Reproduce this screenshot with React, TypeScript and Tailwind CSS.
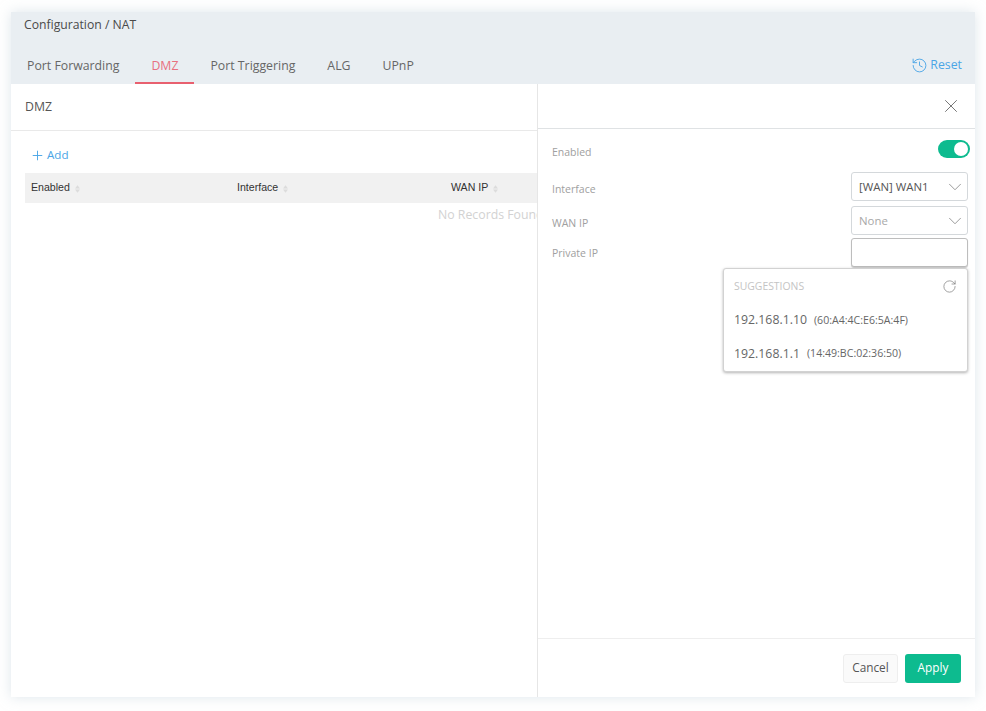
import { FC } from "react";
import { ChevronDown, History, Plus, RotateCw, X } from "lucide-react";

const font = { fontFamily: '"Open Sans", sans-serif' };

const tabs = ["Port Forwarding", "DMZ", "Port Triggering", "ALG", "UPnP"];

const SortIcon: FC = () => (
  <svg width="5" height="8" viewBox="0 0 6 9" className="ml-[5px] mt-[2px]">
    <path d="M3 0 L6 4 H0 Z M0 5 H6 L3 9 Z" fill="#dcdcdc" />
  </svg>
);

const SelectBox: FC<{ value: string; muted?: boolean }> = ({ value, muted }) => (
  <div className="w-[117px] h-[29px] border border-[#d4d8db] rounded-[3px] bg-white flex items-center justify-between pl-[7px] pr-[1px]">
    <span className={muted ? "text-[11.4px] text-[#a8a8a8]" : "text-[11.4px] text-[#555]"}>{value}</span>
    <ChevronDown size={22} strokeWidth={0.8} className="text-[#777]" />
  </div>
);

const App: FC = () => {
  return (
    <div className="w-[986px] h-[711px] bg-white overflow-hidden px-[11px] pt-[12px] pb-[14px]" style={font}>
      <div className="h-full flex flex-col bg-[#e9eef2] shadow-[0_0_12px_rgba(190,205,215,0.5)]">
        {/* Header */}
        <div className="h-[72px] shrink-0 flex flex-col">
          <div className="pl-[13px] pt-[5px] text-[12.2px] leading-[16px] text-[#4a4a4a]">Configuration / NAT</div>
          <div className="mt-[15px] flex items-stretch justify-between pr-[13px]">
            <div className="flex h-[36px]">
              {tabs.map((tab) => (
                <div
                  key={tab}
                  className={
                    tab === "DMZ"
                      ? "px-[16px] pt-[9px] text-[12.3px] leading-[18px] text-[#e8707f] border-b-2 border-[#e8606f]"
                      : "px-[16px] pt-[9px] text-[12.3px] leading-[18px] text-[#666]"
                  }
                >
                  {tab}
                </div>
              ))}
            </div>
            <div className="flex items-center gap-[2px] pb-[2px] text-[12.3px] text-[#4aa5e6]">
              <History size={17} strokeWidth={1.3} />
              <span>Reset</span>
            </div>
          </div>
        </div>

        {/* Body */}
        <div className="flex-1 flex bg-white min-h-0">
          {/* DMZ list */}
          <div className="flex-1 min-w-0 overflow-hidden">
            <div className="h-[47px] border-b border-[#e9e9e9] pl-[14px] flex items-center text-[12.3px] text-[#555]">DMZ</div>
            <div className="pl-[14px]">
              <div className="h-[42px] pl-[5px] pt-[6px] flex items-center gap-[2px] text-[11.6px] text-[#4aa5e6]">
                <Plus size={15} strokeWidth={1.5} />
                <span>Add</span>
              </div>
              <div
                className="h-[30px] w-[540px] bg-[#f1f1f1] flex items-center pl-[6px] text-[10.6px] text-[#333]"
                style={{ fontFamily: '"Liberation Sans", sans-serif' }}
              >
                <div className="w-[206px] flex items-center">Enabled<SortIcon /></div>
                <div className="w-[214px] flex items-center">Interface<SortIcon /></div>
                <div className="flex items-center">WAN IP<SortIcon /></div>
              </div>
              <div className="w-[540px] pl-[413px] pt-[3px] text-[12.3px] leading-[18px] text-[#d2d2d2] whitespace-nowrap">No Records Found</div>
            </div>
          </div>

          {/* Detail drawer */}
          <div className="w-[438px] shrink-0 flex flex-col border-l border-[#e6e6e6]">
            <div className="h-[45px] shrink-0 border-b border-[#dfe2e4] flex items-center justify-end pr-[13px]">
              <X size={22} strokeWidth={0.8} className="text-[#444]" />
            </div>
            <div className="flex-1 relative pl-[14px] pr-[7px] text-[10.5px] text-[#a0a0a0]">
              <div className="h-[39px] flex items-center justify-between pt-[1px]">
                <span className="pt-[8px]">Enabled</span>
                <div className="w-[32px] h-[18px] -mr-[2px] rounded-full bg-[#0dbb8f] flex items-center justify-end pr-[2px]">
                  <div className="w-[14px] h-[14px] rounded-full bg-white" />
                </div>
              </div>
              <div className="mt-[4px] flex items-center justify-between h-[29px]">
                <span className="pt-[6px]">Interface</span>
                <SelectBox value="[WAN] WAN1" />
              </div>
              <div className="mt-[5px] flex items-center justify-between h-[29px]">
                <span className="pt-[6px]">WAN IP</span>
                <SelectBox value="None" muted />
              </div>
              <div className="mt-[3px] flex items-center justify-between h-[29px]">
                <span className="pt-[2px]">Private IP</span>
                <div className="w-[117px] h-[29px] border border-[#bdbdbd] rounded-[3px] bg-white shadow-[0_1px_1px_rgba(0,0,0,0.2)]" />
              </div>

              {/* Suggestions popup */}
              <div className="absolute left-[185px] top-[139px] w-[245px] h-[104px] bg-white rounded-[3px] border border-[#d2d2d2] shadow-[0_1px_3px_rgba(0,0,0,0.3)] px-[10px]">
                <div className="h-[35px] flex items-center justify-between">
                  <span className="text-[10.4px] text-[#c4c4c4]">SUGGESTIONS</span>
                  <RotateCw size={15} strokeWidth={1.1} className="text-[#777]" />
                </div>
                <div className="h-[33px] flex items-center gap-[7px] text-[#666]">
                  <span className="text-[12.3px]">192.168.1.10</span>
                  <span className="text-[10.6px]">(60:A4:4C:E6:5A:4F)</span>
                </div>
                <div className="h-[34px] flex items-center gap-[7px] text-[#666]">
                  <span className="text-[12.3px]">192.168.1.1</span>
                  <span className="text-[10.6px]">(14:49:BC:02:36:50)</span>
                </div>
              </div>
            </div>
            <div className="h-[59px] shrink-0 border-t border-[#eeeeee] flex items-center justify-end gap-[7px] pr-[14px]">
              <div className="w-[55px] h-[29px] rounded-[3px] border border-[#eeeeee] bg-[#fafafa] flex items-center justify-center text-[11.8px] text-[#555]">Cancel</div>
              <div className="w-[56px] h-[29px] rounded-[3px] bg-[#0dbb8f] flex items-center justify-center text-[11.8px] text-white">Apply</div>
            </div>
          </div>
        </div>
      </div>
    </div>
  );
};

export default App;
